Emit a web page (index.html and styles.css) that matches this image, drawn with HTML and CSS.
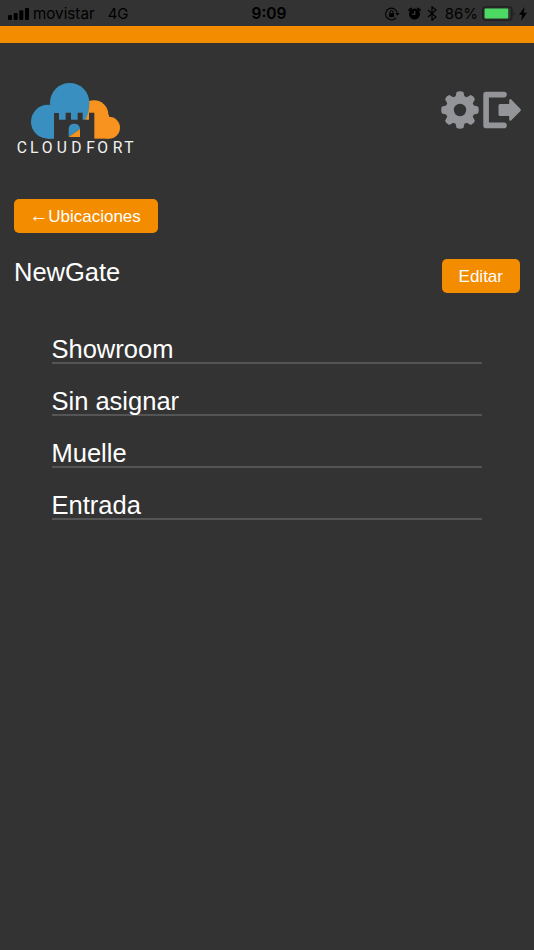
FILE: index.html
```html
<!DOCTYPE html>
<html lang="es">
<head>
  <meta charset="UTF-8">
  <meta name="viewport" content="width=device-width, initial-scale=1.0">
  <title>Cloudfort - NewGate</title>
  <link rel="stylesheet" href="styles.css">
</head>
<body>
  <div class="status-bar">
    <div class="status-left">
      <svg class="signal" viewBox="0 0 22 13" width="22" height="13">
        <rect x="0" y="8" width="4" height="5" rx="1"/>
        <rect x="5.7" y="6" width="4" height="7" rx="1"/>
        <rect x="11.3" y="3.3" width="4" height="9.7" rx="1"/>
        <rect x="17" y="1" width="4" height="12" rx="1"/>
      </svg>
      <span class="carrier">movistar</span>
      <span class="network">4G</span>
    </div>
    <div class="time">9:09</div>
    <div class="status-right">
      <svg class="lock" viewBox="0 0 15 14" width="15" height="14">
        <path d="M12.2 5.5A5.9 5.9 0 1 0 11 10.9" fill="none" stroke="#000" stroke-width="1.1"/>
        <path d="M10.2 6h4.4L12.5 8.8z"/>
        <rect x="4.1" y="6.2" width="5" height="4" rx=".6"/>
        <path d="M5.1 6.3V5a1.5 1.5 0 0 1 3 0v1.3" fill="none" stroke="#000"/>
      </svg>
      <svg class="alarm" viewBox="0 0 13 13" width="13" height="13">
        <circle cx="6.5" cy="7" r="5.5"/>
        <path d="M1 3.2 3 1.4M12 3.2 10 1.4" stroke="#000" stroke-width="1.7" stroke-linecap="round"/>
        <path d="M6.8 4v3.3H3.9" fill="none" stroke="#444" stroke-width="1.1"/>
      </svg>
      <svg class="bluetooth" viewBox="0 0 10 15" width="10" height="15">
        <path d="M1 4l8 7-4 3.3V.8L9 4l-8 7" fill="none" stroke="#000" stroke-width="1.2"/>
      </svg>
      <span class="percent">86%</span>
      <svg class="battery" viewBox="0 0 34 15" width="34" height="15">
        <rect x=".8" y=".9" width="29" height="13.2" rx="2.8" fill="none" stroke="#1d1d1d" stroke-width="1.4"/>
        <rect x="2.6" y="2.6" width="23.6" height="9.9" rx="1" fill="#4cd964"/>
        <path d="M31.4 5.2q2.2 2.3 0 4.6z" fill="#1d1d1d"/>
      </svg>
      <svg class="bolt" viewBox="0 0 8 14" width="8" height="14">
        <path d="M5.5 0 0 7.8h3.2L2 14 8 5.7H4.7z"/>
      </svg>
    </div>
  </div>

  <div class="top-line"></div>

  <header>
    <svg class="logo" viewBox="0 0 390 252" width="130" height="84">
      <g fill="#f7931e">
        <circle cx="252" cy="116" r="43"/>
        <circle cx="297" cy="155" r="33"/>
        <rect x="222" y="116" width="75" height="72"/>
      </g>
      <g fill="#3a8fc1">
        <circle cx="179" cy="80" r="59"/>
        <circle cx="114" cy="137" r="51"/>
        <path d="M121 87L150 80H238Q238 110 226 131L200 188H114V137Z"/>
      </g>
      <path d="M132 189V111H147V131H167V110H183V131H203V110H218V131H237V110H253V189Z" fill="#333"/>
      <path d="M176 183V158Q177 143 193 143Q208 143 210 158V159Z" fill="#3a8fc1"/>
      <path d="M210 159V183H176Z" fill="#f7931e"/>
      <text class="logo-text" x="20 60 95 140 184 229 262 308 343" y="232">CLOUDFORT</text>
    </svg>
    <div class="actions">
      <svg class="gear" viewBox="0 0 38 38" width="38" height="38">
        <path fill-rule="evenodd" d="M15.6 1Q19-.6 22.4 1L23.4 5.2 25.8 6.2 29.7 4.1Q33 5 33.9 8.3L31.8 12.2 32.8 14.6 37 15.6Q38.6 19 37 22.4L32.8 23.4 31.8 25.8 33.9 29.7Q33 33 29.7 33.9L25.8 31.8 23.4 32.8 22.4 37Q19 38.6 15.6 37L14.6 32.8 12.2 31.8 8.3 33.9Q5 33 4.1 29.7L6.2 25.8 5.2 23.4 1 22.4Q-.6 19 1 15.6L5.2 14.6 6.2 12.2 4.1 8.3Q5 5 8.3 4.1L12.2 6.2 14.6 5.2ZM19 12.8A6.2 6.2 0 1 0 19 25.2A6.2 6.2 0 1 0 19 12.8Z"/>
      </svg>
      <svg class="logout" viewBox="0 0 38 38" width="38" height="38">
        <path d="M21 3.6H3.1V34.4H21" fill="none" stroke="#939598" stroke-width="5.6" stroke-linecap="round" stroke-linejoin="round"/>
        <path d="M17 13H26.2V9.5Q26.5 7.3 28 8.3L37.5 17.9Q38.2 19 37.5 20.1L28 29.4Q26.5 30.3 26.2 28.5V25H17Q15.5 25 15.5 23.5V14.5Q15.5 13 17 13Z"/>
      </svg>
    </div>
  </header>

  <main>
    <button class="btn btn-back"><span class="arrow">←</span>Ubicaciones</button>
    <div class="title-row">
      <h1>NewGate</h1>
      <button class="btn">Editar</button>
    </div>
    <ul class="zones">
      <li>Showroom</li>
      <li>Sin asignar</li>
      <li>Muelle</li>
      <li>Entrada</li>
    </ul>
  </main>
</body>
</html>
```
FILE: styles.css
```css
body {
  margin: 0;
  min-height: 950px;
  background-color: #333;
  color: #fff;
  font-family: "Liberation Sans", Arial, sans-serif;
}
svg {
  display: block;
  flex-shrink: 0;
}
.status-bar {
  display: grid;
  grid-template-columns: 1fr auto 1fr;
  height: 26px;
  color: #000;
  font-family: Inter, sans-serif;
  font-size: 15px;
  line-height: 28px;
}
.status-left, .status-right {
  display: flex;
  align-items: center;
  height: 27px;
}
.status-left {
  padding-left: 8px;
}
.carrier {
  margin-left: 3px;
  font-size: 15.2px;
}
.network {
  margin-left: 13px;
}
.time {
  font-size: 15.5px;
  font-weight: 600;
  margin-left: 4px;
}
.status-right {
  justify-content: flex-end;
  padding-right: 7px;
}
.alarm {
  margin-left: 8px;
}
.bluetooth {
  margin-left: 6px;
}
.percent {
  margin-left: 8px;
}
.battery {
  margin-left: 4px;
}
.bolt {
  margin-left: 3px;
}
.top-line {
  height: 17px;
  background-color: #f48c00;
}
header {
  display: flex;
  justify-content: space-between;
  padding: 33px 13px 0 10px;
}
.logo {
  overflow: visible;
}
.logo-text {
  fill: #f2f2f2;
  font-family: Roboto, sans-serif;
  font-size: 47px;
}
.actions {
  display: flex;
  gap: 4px;
  margin-top: 15px;
  fill: #939598;
}
main {
  padding: 39px 14px 0;
}
.btn {
  display: block;
  height: 34px;
  padding: 2px 17px 0;
  border: none;
  border-radius: 5px;
  background-color: #f48c00;
  color: #fff;
  font-family: inherit;
  font-size: 17px;
  cursor: pointer;
}
.btn-back {
  width: 144px;
  padding: 2px 2px 0 0;
}
.arrow {
  font-size: 19px;
  line-height: 0;
}
.title-row {
  display: flex;
  justify-content: space-between;
  margin-top: 26px;
}
h1 {
  margin: -2px 0 0;
  font-size: 25.5px;
  font-weight: normal;
  line-height: 30px;
}
.zones {
  list-style: none;
  margin: 40.6px 38px 0 37.5px;
  padding: 0;
}
.zones li {
  height: 28px;
  margin-bottom: 22.1px;
  border-bottom: 2px solid #555;
  font-size: 25.5px;
  line-height: 31px;
}
```
